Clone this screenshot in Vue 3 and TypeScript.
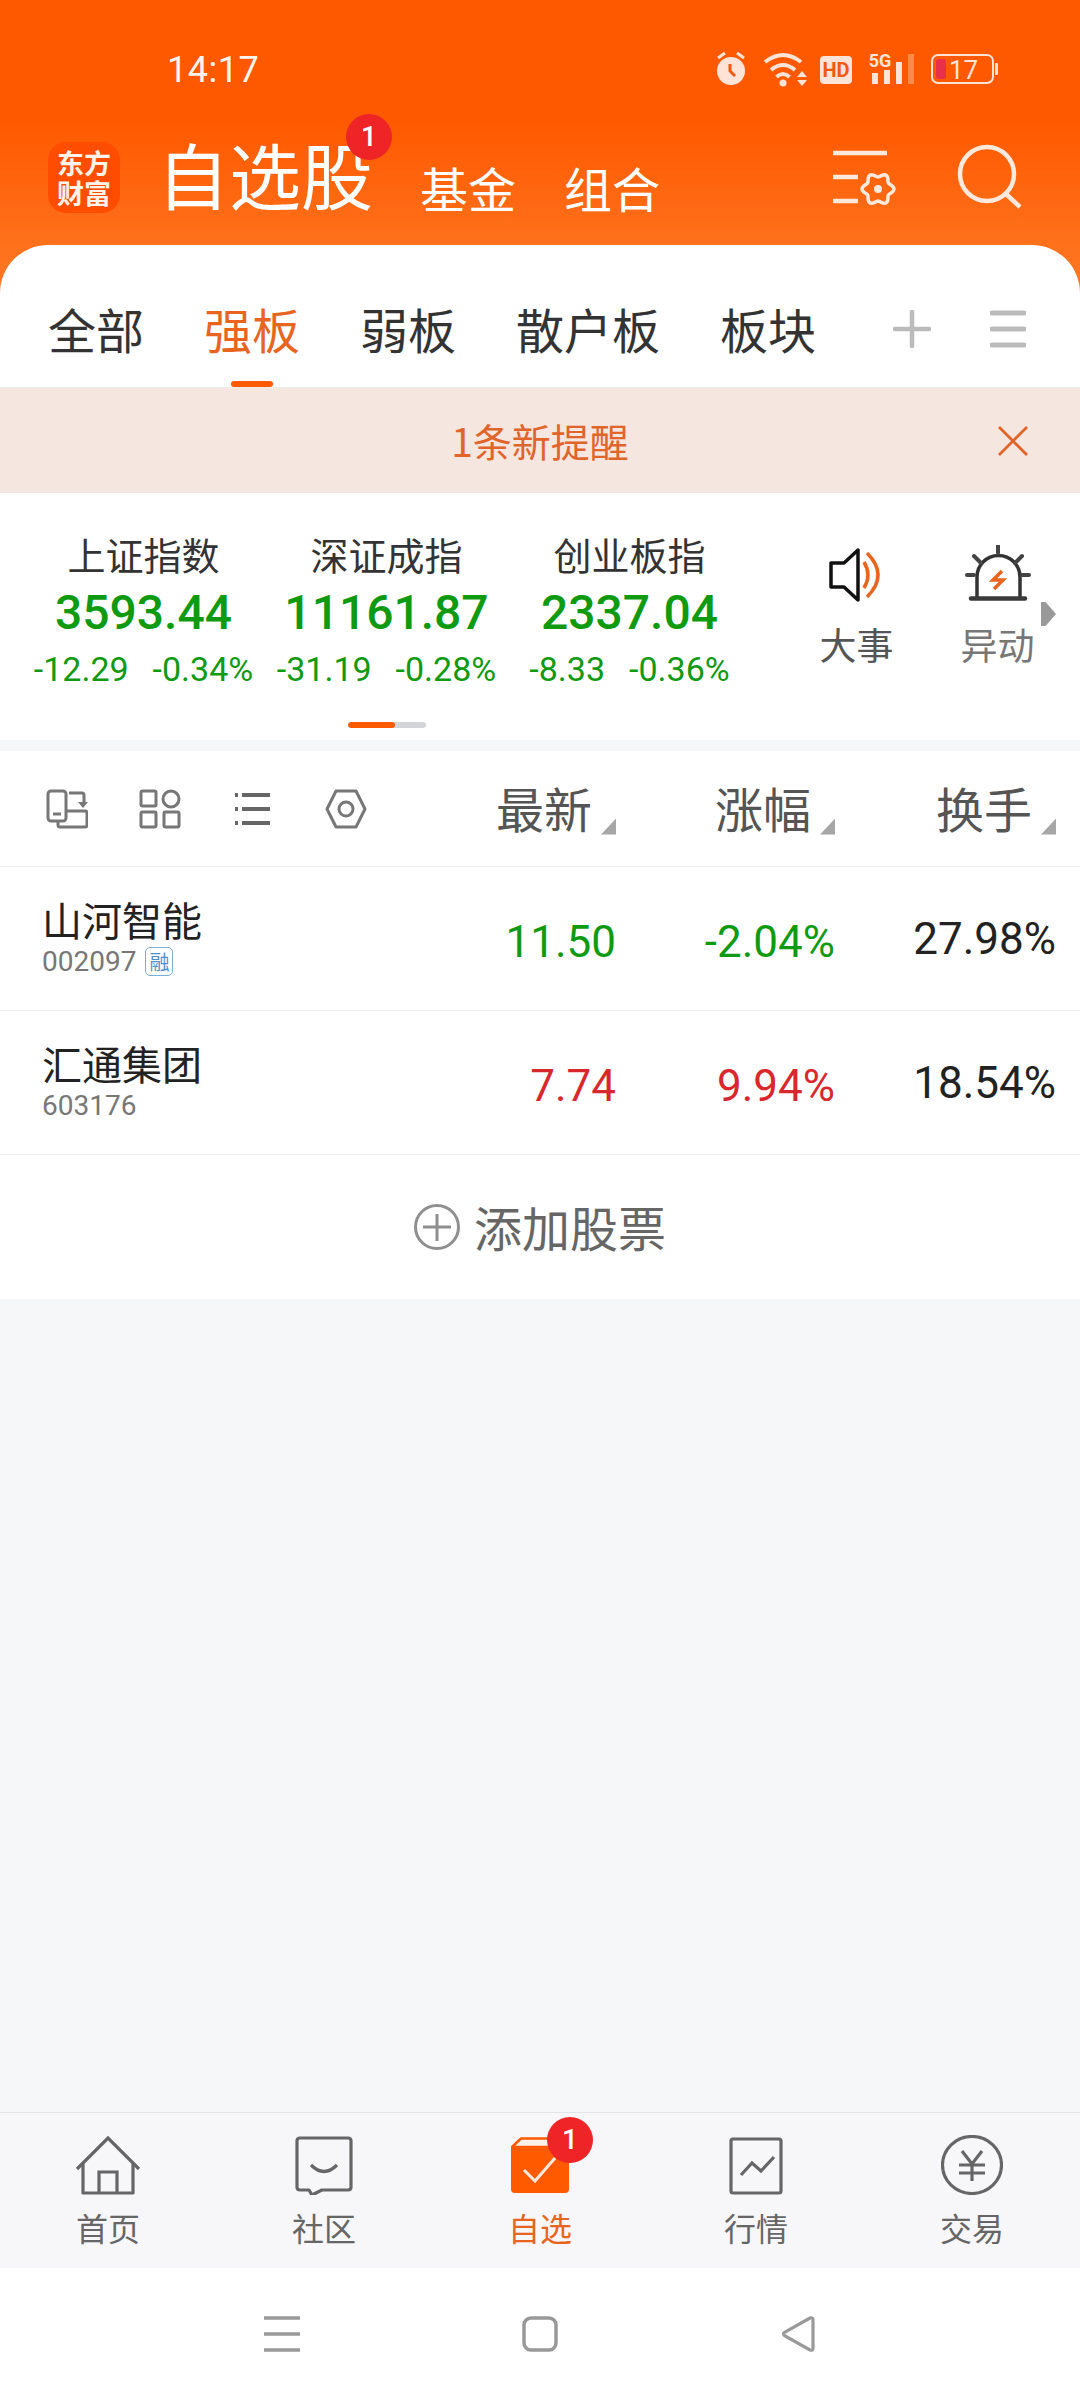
<script setup lang="ts">
interface IndexItem {
  name: string
  value: string
  diff: string
  pct: string
}

interface Stock {
  name: string
  code: string
  margin: boolean
  price: string
  change: string
  turnover: string
  dir: 'up' | 'down'
}

const tabs = ['全部', '强板', '弱板', '散户板', '板块']
const activeTab = '强板'

const indexes: IndexItem[] = [
  { name: '上证指数', value: '3593.44', diff: '-12.29', pct: '-0.34%' },
  { name: '深证成指', value: '11161.87', diff: '-31.19', pct: '-0.28%' },
  { name: '创业板指', value: '2337.04', diff: '-8.33', pct: '-0.36%' }
]

const columns = ['最新', '涨幅', '换手']

const stocks: Stock[] = [
  { name: '山河智能', code: '002097', margin: true, price: '11.50', change: '-2.04%', turnover: '27.98%', dir: 'down' },
  { name: '汇通集团', code: '603176', margin: false, price: '7.74', change: '9.94%', turnover: '18.54%', dir: 'up' }
]

// six soft lobes round the settings gear
const gearPath = (() => {
  const pts: string[] = []
  for (let a = 0; a < 360; a += 6) {
    const t = (a * Math.PI) / 180
    const r = 14 + 2 * Math.cos(6 * t)
    pts.push(`${(876 + r * Math.cos(t)).toFixed(1)} ${(189 + r * Math.sin(t)).toFixed(1)}`)
  }
  return `M${pts.join('L')}Z`
})()
</script>

<template>
  <div class="page">
    <header class="head">
      <div class="status">
        <span class="time">14:17</span>
        <svg class="status-icons" width="290" height="40" viewBox="712 50 290 40">
          <!-- alarm -->
          <circle cx="731" cy="71" r="14" fill="#ffe3d6" />
          <path d="M718 58l7-5M744 58l-7-5" stroke="#ffe3d6" stroke-width="3" fill="none" />
          <path d="M730 64v7l5 5" stroke="#f05a10" stroke-width="3" fill="none" />
          <!-- wifi -->
          <g fill="none" stroke="#ffe3d6" stroke-width="4">
            <path d="M765 62q18-14 36 0" />
            <path d="M771 70q12-10 24 0" />
            <path d="M776.500 77q6.500-6 13 0" />
          </g>
          <circle cx="783" cy="83" r="3.500" fill="#ffe3d6" />
          <path d="M797 77l5-6 5 6zM797 80l5 6 5-6z" fill="#ffe3d6" />
          <!-- hd -->
          <rect x="820" y="56" width="32" height="28" rx="4" fill="#ffe3d6" />
          <text x="836" y="77" class="hd">HD</text>
          <!-- signal -->
          <text x="880" y="67" class="five">5G</text>
          <rect x="872" y="73" width="6" height="11" fill="#ffe3d6" />
          <rect x="884" y="70" width="6" height="14" fill="#ffe3d6" />
          <rect x="896" y="62" width="6" height="22" fill="#ffe3d6" />
          <rect x="908" y="54" width="6" height="30" fill="#ff8a4a" />
          <!-- battery -->
          <rect x="932" y="55" width="61" height="28" rx="6" fill="none" stroke="#ffe3d6" stroke-width="2" />
          <rect x="936" y="59" width="10" height="20" rx="3" fill="#e8304a" />
          <text x="949" y="79" class="batt">17</text>
          <rect x="995" y="63" width="3" height="12" rx="1" fill="#ffe3d6" />
        </svg>
      </div>
      <div class="brand-row">
        <div class="logo"><span>东方</span><span>财富</span></div>
        <div class="title">
          自选股
          <span class="badge head-badge">1</span>
        </div>
        <span class="sub">基金</span>
        <span class="sub">组合</span>
        <svg class="gear" width="66" height="60" viewBox="829 150 66 60">
          <path d="M831 153h54M831 177h25M831 201h25" stroke="#ffe8dc" stroke-width="4.500" fill="none" />
          <path :d="gearPath" fill="none" stroke="#ffe8dc" stroke-width="3.500" />
          <circle cx="876" cy="189" r="4" fill="#ffe8dc" />
        </svg>
        <svg class="search" width="68" height="68" viewBox="956 143 68 68">
          <circle cx="987" cy="174" r="27" fill="none" stroke="#ffe8dc" stroke-width="4.500" />
          <path d="M1006 194l14 13" stroke="#ffe8dc" stroke-width="4.500" fill="none" />
        </svg>
      </div>
    </header>

    <section class="sheet">
      <nav class="tabs">
        <span v-for="t in tabs" :key="t" class="tab" :class="{ active: t === activeTab }">{{ t }}</span>
        <div class="tab-tools">
          <svg width="38" height="38" viewBox="0 0 38 38">
            <path d="M19 2v34M2 19h34" stroke="#bbbbbb" stroke-width="4.500" stroke-linecap="round" />
          </svg>
          <svg width="36" height="38" viewBox="0 0 36 38">
            <path d="M2 3h32M2 19h32M2 35h32" stroke="#bbbbbb" stroke-width="5" stroke-linecap="round" />
          </svg>
        </div>
      </nav>

      <div class="notice">
        <span></span>
        <span class="notice-text">1条新提醒</span>
        <svg class="notice-close" width="30" height="30" viewBox="0 0 30 30">
          <path d="M1 1l28 28M29 1L1 29" stroke="#e0652a" stroke-width="2.800" />
        </svg>
      </div>

      <div class="market">
        <div class="market-row">
          <div class="indexes">
            <div v-for="item in indexes" :key="item.name" class="index">
              <div class="index-name">{{ item.name }}</div>
              <div class="index-value">{{ item.value }}</div>
              <div class="index-change">
                <span>{{ item.diff }}</span>
                <span>{{ item.pct }}</span>
              </div>
            </div>
          </div>
          <div class="shortcut">
            <svg width="56" height="60" viewBox="828 545 56 60">
              <path d="M857 550v50l-14-13h-13v-24h13z" fill="none" stroke="#111" stroke-width="3.500" stroke-linejoin="round" />
              <path d="M863 562q8 13 0 26" fill="none" stroke="#e8651f" stroke-width="3.500" />
              <path d="M866 553q22 22 0 44" fill="none" stroke="#e8651f" stroke-width="3.500" />
            </svg>
            <span>大事</span>
          </div>
          <div class="shortcut">
            <svg width="66" height="60" viewBox="964 545 66 60">
              <path d="M976 597v-20a21 21 0 0 1 43 0v20" fill="none" stroke="#333" stroke-width="3.500" />
              <path d="M970 598.500h54" stroke="#3a3a3a" stroke-width="4.500" stroke-linecap="round" />
              <path d="M997 546v7M973 556l7 7M1021 556l-7 7M966 575h7M1021 575h7" stroke="#444" stroke-width="4" stroke-linecap="round" />
              <path d="M1001 571l-9 9h10l-9 9" fill="none" stroke="#e8651f" stroke-width="3.500" />
            </svg>
            <span class="muted">异动</span>
          </div>
          <i class="more-arrow"></i>
        </div>
        <div class="scroll-track"><div class="scroll-thumb"></div></div>
      </div>

      <div class="grid toolbar">
        <div class="tool-icons">
          <svg width="42" height="40" viewBox="0 0 42 40">
            <g fill="none" stroke="#777" stroke-width="3">
              <rect x="2" y="2" width="18" height="30" rx="3" />
              <path d="M23 4h13q2 0 2 2v9" />
              <path d="M21 22h18q2 0 2 2v12q0 2-2 2H14q-2 0-2-2v-4" />
              <path d="M7 25h8" />
            </g>
            <path d="M33 13h10l-5 6z" fill="#777" transform="translate(-1 0)" />
          </svg>
          <svg width="42" height="40" viewBox="0 0 42 40">
            <g fill="none" stroke="#777" stroke-width="3">
              <rect x="2" y="2" width="15" height="15" rx="1.500" />
              <circle cx="32" cy="10" r="8" />
              <rect x="2" y="23" width="15" height="15" rx="1.500" />
              <rect x="25" y="23" width="15" height="15" rx="1.500" />
            </g>
          </svg>
          <svg width="42" height="40" viewBox="0 0 42 40">
            <path d="M10 6h28M10 20h28M10 34h28" stroke="#666" stroke-width="4" />
            <path d="M3 6h3M3 20h3M3 34h3" stroke="#666" stroke-width="4" />
          </svg>
          <svg width="42" height="40" viewBox="0 0 42 40">
            <path d="M11 2h20l9 18-9 18H11L2 20z" fill="none" stroke="#777" stroke-width="3" stroke-linejoin="round" />
            <circle cx="21" cy="20" r="7" fill="none" stroke="#777" stroke-width="3" />
          </svg>
        </div>
        <div v-for="c in columns" :key="c" class="col-head">
          <span>{{ c }}</span>
          <i class="sort"></i>
        </div>
      </div>

      <div v-for="s in stocks" :key="s.code" class="grid row">
        <div class="stock">
          <div class="stock-name">{{ s.name }}</div>
          <div class="stock-code">
            {{ s.code }}
            <span v-if="s.margin" class="tag">融</span>
          </div>
        </div>
        <div class="num low" :class="s.dir">{{ s.price }}</div>
        <div class="num low" :class="s.dir">{{ s.change }}</div>
        <div class="num">{{ s.turnover }}</div>
      </div>

      <div class="add">
        <svg width="46" height="46" viewBox="0 0 46 46">
          <circle cx="23" cy="23" r="21.500" fill="none" stroke="#8f8f8f" stroke-width="3" />
          <path d="M23 10v27M9 23h28" stroke="#8f8f8f" stroke-width="3" />
        </svg>
        <span>添加股票</span>
      </div>
    </section>

    <div class="spacer"></div>

    <footer class="tabbar">
      <div class="tabbar-item">
        <svg width="66" height="60" viewBox="0 0 66 60">
          <path d="M2 34L33 3l31 31" fill="none" stroke="#666" stroke-width="3.200" />
          <path d="M8 29v29h50V29" fill="none" stroke="#666" stroke-width="3.200" stroke-linejoin="round" />
          <path d="M24 58V37h18v21" fill="none" stroke="#666" stroke-width="3.200" />
        </svg>
        <span>首页</span>
      </div>
      <div class="tabbar-item">
        <svg width="58" height="60" viewBox="0 0 58 60">
          <path d="M5 3h48q3 0 3 3v46q0 3-3 3H27l-10 5-3-5H5q-3 0-3-3V6q0-3 3-3z" fill="none" stroke="#666" stroke-width="3.200" stroke-linejoin="round" />
          <path d="M16 30q13 13 26 0" fill="none" stroke="#666" stroke-width="3.200" />
        </svg>
        <span>社区</span>
      </div>
      <div class="tabbar-item on">
        <svg width="58" height="60" viewBox="0 0 58 60">
          <path d="M10 3.500h38L57 12H1z" fill="#fdf1e9" stroke="#ff5a00" stroke-width="2.500" stroke-linejoin="round" />
          <path d="M0 12h58v42q0 4-4 4H4q-4 0-4-4z" fill="#ff5a00" />
          <path d="M13 35l11 11 20-23" fill="none" stroke="#ffe9dd" stroke-width="3" />
        </svg>
        <span>自选</span>
        <span class="badge nav-badge">1</span>
      </div>
      <div class="tabbar-item">
        <svg width="54" height="60" viewBox="0 0 54 60">
          <rect x="2" y="4" width="50" height="54" rx="2" fill="none" stroke="#666" stroke-width="3.200" />
          <path d="M12 40l11-12 9 8 13-14" fill="none" stroke="#666" stroke-width="3.200" />
        </svg>
        <span>行情</span>
      </div>
      <div class="tabbar-item">
        <svg width="62" height="60" viewBox="0 0 62 60">
          <ellipse cx="31" cy="30" rx="29.500" ry="28.500" fill="none" stroke="#666" stroke-width="3.200" />
          <path d="M21 16l10 13 10-13M31 29v17M18 30h26M18 38h26" fill="none" stroke="#666" stroke-width="3.200" />
        </svg>
        <span>交易</span>
      </div>
    </footer>

    <div class="navbar">
      <svg width="36" height="36" viewBox="0 0 36 36">
        <path d="M0 2h36M0 18h36M0 34h36" stroke="#999" stroke-width="3.500" />
      </svg>
      <svg width="36" height="36" viewBox="0 0 36 36">
        <rect x="2" y="2" width="32" height="32" rx="7" fill="none" stroke="#999" stroke-width="3.500" />
      </svg>
      <svg width="36" height="36" viewBox="0 0 36 36">
        <path d="M33 4v28q0 3-3 2L5 20q-3-2 0-4L30 2q3-1 3 2z" fill="none" stroke="#999" stroke-width="3.200" />
      </svg>
    </div>
  </div>
</template>

<style>
body {
  background: #f6f7f9;
}
</style>

<style scoped>
.page {
  width: 1080px;
  height: 2400px;
  display: flex;
  flex-direction: column;
  background: #f6f7f9;
  font-family: "Noto Sans CJK SC", "Noto Sans", sans-serif;
  overflow: hidden;
}

.head {
  height: 295px;
  flex: none;
  background: linear-gradient(to bottom, #ff5900 0, #ff5900 120px, #ff7a26 295px);
  color: #fff;
}

.status {
  height: 140px;
  padding: 50px 78px 0 167px;
  box-sizing: border-box;
  display: flex;
  align-items: flex-start;
}

.time {
  font: 400 36px/40px Roboto, sans-serif;
  letter-spacing: 0.5px;
  color: #fff4ee;
}

.status-icons {
  margin-left: auto;
  flex: none;
}

.hd {
  font: 700 20px Roboto, sans-serif;
  fill: #f05a10;
  text-anchor: middle;
}

.five {
  font: 700 18px "Roboto", sans-serif;
  fill: #ffe3d6;
  text-anchor: middle;
}

.batt {
  font: 400 26px Roboto, sans-serif;
  fill: #ffe3d6;
}

.brand-row {
  height: 73px;
  padding-left: 48px;
  display: flex;
  align-items: flex-start;
}

.logo {
  width: 72px;
  height: 71px;
  margin-top: 2px;
  border-radius: 18px;
  background: #ff4d00;
  font-size: 27px;
  font-weight: 700;
  line-height: 30px;
  color: #fff3ea;
  display: flex;
  flex-direction: column;
  align-items: center;
  justify-content: center;
  flex: none;
}

.title {
  position: relative;
  margin: -3px -1px 0 37px;
  width: 216px;
  font-size: 72px;
  line-height: 72px;
  flex: none;
}

.sub {
  margin: 23px 0 0 48px;
  font-size: 48px;
  line-height: 48px;
  flex: none;
}

.gear {
  margin: 10px 0 0 171px;
  flex: none;
}

.search {
  margin: 3px 0 0 59px;
  flex: none;
}

.badge {
  position: absolute;
  width: 46px;
  height: 46px;
  border-radius: 50%;
  background: #ee2427;
  color: #fff;
  font: 500 28px/46px Roboto, sans-serif;
  text-align: center;
}

.head-badge {
  left: 189px;
  top: -23px;
}

.sheet {
  position: relative;
  margin-top: -50px;
  border-radius: 48px 48px 0 0;
  flex: none;
}

.tabs {
  height: 143px;
  box-sizing: border-box;
  padding: 59px 0 0 48px;
  display: flex;
  gap: 60px;
  background: #fff;
  border-radius: 48px 48px 0 0;
  border-bottom: 1px solid #ececec;
}

.tab {
  position: relative;
  font-size: 48px;
  line-height: 48px;
  height: 83px;
  color: #333;
}

.tab.active {
  color: #e8651f;
}

.tab.active::after {
  content: "";
  position: absolute;
  left: 27px;
  bottom: 0;
  width: 42px;
  height: 6px;
  border-radius: 3px;
  background: #ff5a00;
}

.tab-tools {
  margin-left: 17px;
  display: flex;
  align-items: flex-start;
  gap: 59px;
  padding-top: 6px;
}

.notice {
  height: 105px;
  background: #f6e6e0;
  display: grid;
  grid-template-columns: 1fr auto 1fr;
  align-items: center;
}

.notice-text {
  font-size: 39px;
  line-height: 40px;
  margin-top: -2px;
  color: #e0652a;
}

.notice-close {
  justify-self: end;
  margin-right: 52px;
}

.market {
  height: 247px;
  background: #fff;
}

.market-row {
  position: relative;
  height: 229px;
  display: flex;
}

.indexes {
  padding-left: 22px;
  width: 751px;
  box-sizing: border-box;
  margin-right: 35px;
  display: flex;
  flex: none;
}

.index {
  width: 243px;
  padding-top: 42px;
  display: flex;
  flex-direction: column;
  align-items: center;
}

.index-name {
  font-size: 38px;
  line-height: 38px;
  color: #333;
}

.index-value {
  margin-top: 15px;
  font: 500 48px/50px Roboto, sans-serif;
  color: #0f9a12;
}

.index-change {
  margin-top: 14px;
  display: flex;
  gap: 24px;
  font: 400 34px/34px Roboto, sans-serif;
  color: #0f9a12;
  white-space: nowrap;
}

.shortcut {
  width: 141px;
  padding-top: 52px;
  display: flex;
  flex-direction: column;
  align-items: center;
  font-size: 37px;
  line-height: 38px;
  color: #555;
  flex: none;
}

.shortcut span {
  margin-top: 20px;
}

.shortcut .muted {
  color: #777;
}

.more-arrow {
  position: absolute;
  left: 1041px;
  top: 109px;
  width: 15px;
  height: 24px;
  background: #999;
  clip-path: polygon(0 0, 30% 0, 100% 50%, 30% 100%, 0 100%);
}

.scroll-track {
  width: 78px;
  height: 6px;
  margin-left: 348px;
  border-radius: 3px;
  background: #d3d5d8;
  overflow: hidden;
}

.scroll-thumb {
  width: 47px;
  height: 6px;
  border-radius: 3px;
  background: #ff5a00;
}

.grid {
  display: grid;
  grid-template-columns: 400px 216px 219px 221px;
  padding-right: 24px;
  align-items: center;
  background: #fff;
  border-bottom: 1px solid #ececec;
  box-sizing: border-box;
}

.toolbar {
  margin-top: 11px;
  height: 116px;
}

.tool-icons {
  padding-left: 46px;
  display: flex;
  gap: 51px;
}

.col-head {
  display: flex;
  justify-content: flex-end;
  align-items: flex-end;
  gap: 9px;
  padding-bottom: 4px;
  font-size: 48px;
  line-height: 48px;
  color: #555;
}

.sort {
  width: 15px;
  height: 16px;
  margin-bottom: -4px;
  background: #a6a6a6;
  clip-path: polygon(100% 0, 100% 100%, 0 100%);
}

.row {
  height: 144px;
}

.stock {
  padding-left: 42px;
}

.stock-name {
  font-size: 40px;
  line-height: 40px;
  color: #222;
  margin-top: -2px;
}

.stock-code {
  margin-top: 8px;
  height: 30px;
  display: flex;
  align-items: center;
  font: 400 28px/30px Roboto, sans-serif;
  color: #777;
}

.tag {
  margin-left: 9px;
  width: 28px;
  height: 29px;
  box-sizing: border-box;
  border: 1px solid #79aedb;
  border-radius: 5px;
  font: 400 20px/27px "Noto Sans CJK SC", sans-serif;
  text-align: center;
  color: #4d8fcb;
}

.num {
  text-align: right;
  font: 400 44px/44px Roboto, sans-serif;
  color: #222;
}

.num.low {
  margin-top: 6px;
}

.num.down {
  color: #0f9a12;
}

.num.up {
  color: #d9272e;
}

.add {
  height: 144px;
  background: #fff;
  display: flex;
  align-items: center;
  justify-content: center;
  gap: 14px;
  font-size: 48px;
  line-height: 48px;
  color: #666;
}

.add span {
  margin-top: -2px;
}

.spacer {
  flex: 1;
}

.tabbar {
  height: 156px;
  box-sizing: border-box;
  flex: none;
  display: flex;
  background: #f7f7fa;
  border-top: 1px solid #e3e4e6;
}

.tabbar-item {
  position: relative;
  flex: 1;
  padding-top: 22px;
  display: flex;
  flex-direction: column;
  align-items: center;
  font-size: 32px;
  line-height: 32px;
  color: #666;
}

.tabbar-item span:not(.badge) {
  margin-top: 16px;
}

.tabbar-item.on {
  color: #e8651f;
}

.nav-badge {
  left: 115px;
  top: 4px;
}

.navbar {
  height: 132px;
  flex: none;
  background: #fff;
  display: flex;
  align-items: center;
  justify-content: center;
  gap: 222px;
}
</style>
